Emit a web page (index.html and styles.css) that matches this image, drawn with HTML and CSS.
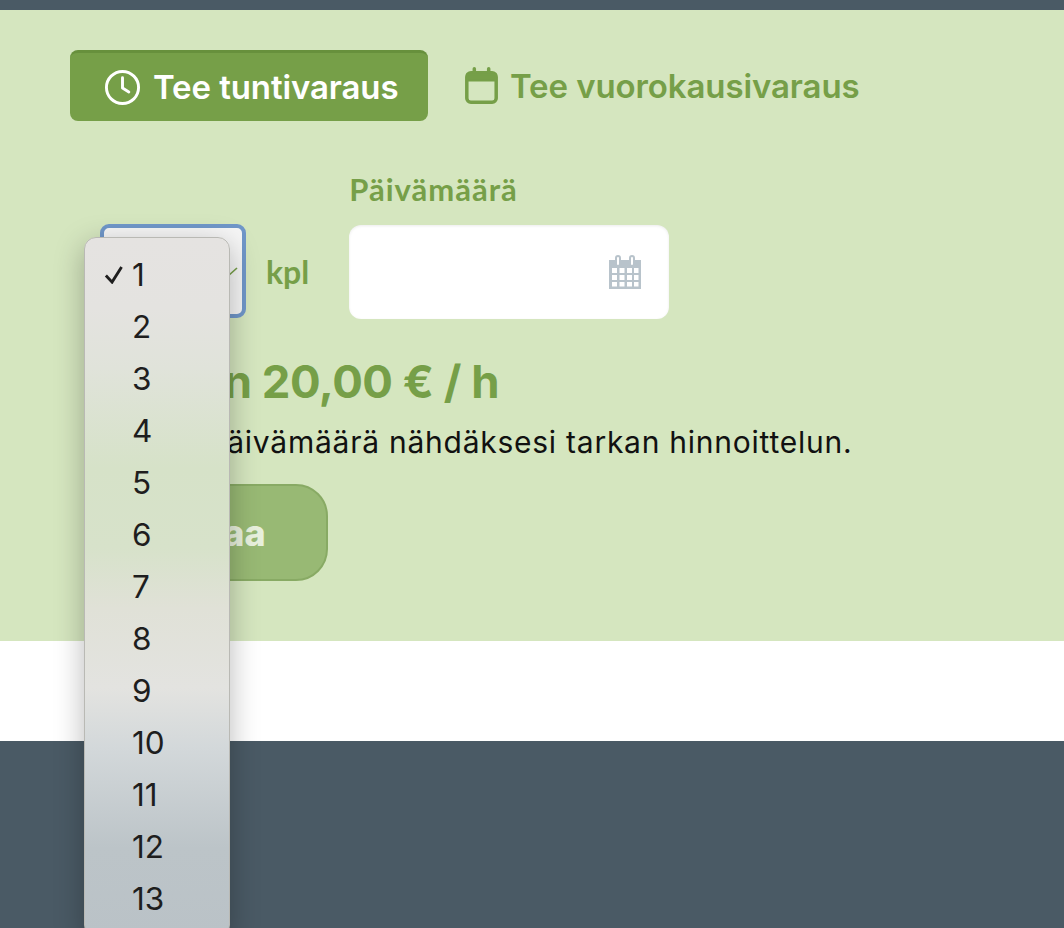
FILE: index.html
```html
<!DOCTYPE html>
<html lang="fi">
  <head>
    <meta charset="UTF-8" />
    <meta name="viewport" content="width=device-width, initial-scale=1.0" />
    <title>Tee tuntivaraus</title>
    <link rel="stylesheet" href="styles.css">
  </head>
  <body>
    <div class="page">
      <div class="top-bar"></div>

      <section class="booking">
        <div class="tabs">
          <a class="tab tab-active" href="#">
            <svg class="tab-icon" viewBox="0 0 38 38" fill="none" stroke="currentColor" stroke-width="3" stroke-linecap="round" stroke-linejoin="round">
              <circle cx="19" cy="19" r="16.5" />
              <path d="M19 9v10.5l6.5 4" />
            </svg>
            Tee tuntivaraus
          </a>
          <a class="tab" href="#">
            <svg class="tab-icon tab-icon-calendar" viewBox="0 0 32 36" fill="none" stroke="currentColor" stroke-width="3.4" stroke-linecap="round" stroke-linejoin="round">
              <rect x="1.700" y="5.700" width="28.600" height="28.600" rx="4" />
              <path d="M9 1.700v5M23 1.700v5" />
              <path d="M2 7h28v6H2z" fill="currentColor" stroke-width="2" />
            </svg>
            Tee vuorokausivaraus
          </a>
        </div>

        <form class="booking-form">
          <div class="form-row">
            <div class="count-field">
              <div class="select-box">
                <svg class="select-tick" viewBox="0 0 12 12" fill="none" stroke="currentColor" stroke-width="1.6">
                  <path d="M1 10l9-8" />
                </svg>
              </div>
              <span class="unit">kpl</span>
            </div>
            <div class="date-field">
              <label class="field-label">Päivämäärä</label>
              <div class="date-input">
                <svg class="date-icon" viewBox="0 0 32 34" fill="currentColor">
                  <path fill-rule="evenodd" d="M0 5h6V3a3 3 0 0 1 6 0v2h8V3a3 3 0 0 1 6 0v2h6v29H0zM8 3v6a1 1 0 0 0 2 0V3a1 1 0 0 0-2 0zm14 0v6a1 1 0 0 0 2 0V3a1 1 0 0 0-2 0zM3 13v5h5v-5zm7.500 0v5h5v-5zm7.500 0v5h5v-5zm7 0v5h4.500v-5zM3 20v5h5v-5zm7.500 0v5h5v-5zm7.500 0v5h5v-5zm7 0v5h4.500v-5zM3 27v4.500h5V27zm7.500 0v4.500h5V27zm7.500 0v4.500h5V27zm7 0v4.500h4.500V27z" />
                </svg>
              </div>
            </div>
          </div>

          <h2 class="price">Alkaen 20,00 € / h</h2>
          <p class="price-note">Valitse päivämäärä nähdäksesi tarkan hinnoittelun.</p>
          <button class="submit-btn" type="button">Varaa</button>
        </form>
      </section>

      <div class="spacer"></div>
      <footer class="site-footer"></footer>

      <!-- native select popup, open over the form -->
      <ul class="select-popup">
        <li class="selected">
          <svg class="popup-check" viewBox="0 0 20 20" fill="none" stroke="currentColor" stroke-width="3" stroke-linejoin="miter">
            <path d="M2 11l6.500 7L18.500 2" />
          </svg>
          1
        </li>
        <li>2</li>
        <li>3</li>
        <li>4</li>
        <li>5</li>
        <li>6</li>
        <li>7</li>
        <li>8</li>
        <li>9</li>
        <li>10</li>
        <li>11</li>
        <li>12</li>
        <li>13</li>
      </ul>
    </div>
  </body>
</html>
```

FILE: styles.css
```css
html,
body {
  margin: 0;
  height: 100%;
  overflow: hidden;
}

body {
  font-family: "Inter", "Liberation Sans", sans-serif;
  background-color: #fff;
  color: #111;
}

.page {
  position: relative;
  height: 928px;
  overflow: hidden;
  display: flex;
  flex-direction: column;
}

.top-bar {
  height: 10px;
  background-color: #4a5a65;
}

.booking {
  height: 631px;
  box-sizing: border-box;
  padding: 40px 70px 0;
  background-color: #d5e6bf;
}

.spacer {
  height: 100px;
  background-color: #fff;
}

.site-footer {
  flex: 1;
  background-color: #4a5a65;
}

/* Tabs */
.tabs {
  display: flex;
  align-items: center;
  gap: 37px;
}

.tab {
  display: flex;
  align-items: center;
  gap: 12px;
  color: #769f48;
  font-size: 33px;
  font-weight: 600;
  letter-spacing: -0.1px;
  text-decoration: none;
  white-space: nowrap;
}

.tab-active {
  box-sizing: border-box;
  width: 358px;
  height: 71px;
  padding: 0 20px 0 34px;
  color: #fff;
  background-color: #769f48;
  border-top: 3px solid #67903c;
  border-radius: 8px;
}

.tab-icon {
  width: 37px;
  height: 37px;
  flex-shrink: 0;
}

.tab-icon-calendar {
  width: 33px;
}

/* Form */
.booking-form {
  padding: 51px 30px 0;
}

.form-row {
  display: flex;
  align-items: flex-end;
  gap: 40px;
}

.count-field {
  display: flex;
  align-items: center;
  gap: 20px;
  margin-bottom: 1px;
}

.select-box {
  position: relative;
  box-sizing: border-box;
  width: 146px;
  height: 94px;
  background-color: #f6f6f6;
  border: 4px solid #7097c9;
  border-radius: 9px;
}

.select-tick {
  position: absolute;
  right: 3px;
  top: 38px;
  width: 12px;
  height: 12px;
  color: #769f48;
}

.unit,
.field-label {
  color: #769f48;
  font-family: "Lato", "Liberation Sans", sans-serif;
  font-weight: 700;
}

.unit {
  font-size: 32px;
}

.field-label {
  display: block;
  margin-bottom: 17px;
  font-size: 31px;
  letter-spacing: 1px;
  line-height: 35px;
}

.date-input {
  display: flex;
  align-items: center;
  justify-content: flex-end;
  box-sizing: border-box;
  width: 320px;
  height: 94px;
  margin-top: 18px;
  padding-right: 28px;
  background-color: #fff;
  border-radius: 12px;
  box-shadow: inset 0 1px 3px rgba(0, 0, 0, 0.08);
}

.date-icon {
  width: 32px;
  height: 34px;
  color: #b8c3cb;
}

.price {
  margin: 33px 0 0;
  color: #769f48;
  font-size: 45.500px;
  font-weight: 700;
  line-height: 60px;
  letter-spacing: -0.5px;
}

.price-note {
  margin: 11px 0 0;
  font-size: 30px;
  line-height: 38px;
  letter-spacing: 0.75px;
  white-space: nowrap;
}

.submit-btn {
  display: block;
  width: 228px;
  height: 97px;
  margin-top: 23px;
  color: #e8f0dd;
  background-color: #98b974;
  border: 2px solid #88aa64;
  border-radius: 32px;
  font-family: inherit;
  font-size: 36px;
  font-weight: 800;
}

/* Select popup */
.select-popup {
  position: absolute;
  top: 237px;
  left: 84px;
  width: 146px;
  height: 700px;
  margin: 0;
  padding: 11px 0 0;
  box-sizing: border-box;
  list-style: none;
  border: 1px solid #b9b9b4;
  border-radius: 12px;
  background: linear-gradient(
    to bottom,
    #e5e3e1 0,
    #e4e3e0 70px,
    #e0e3da 130px,
    #d6e2c8 230px,
    #d7e2ca 310px,
    #e0e1d7 370px,
    #e3e3e0 450px,
    #d3d8da 510px,
    #bcc4c8 610px,
    #bac2c7 700px
  );
  box-shadow: 0 8px 30px rgba(0, 0, 0, 0.28);
}

.select-popup li {
  position: relative;
  height: 52px;
  padding-left: 47px;
  color: #1e1e1e;
  font-size: 31.500px;
  line-height: 52px;
}

.popup-check {
  position: absolute;
  left: 19px;
  top: 16px;
  width: 19px;
  height: 19px;
}
```
